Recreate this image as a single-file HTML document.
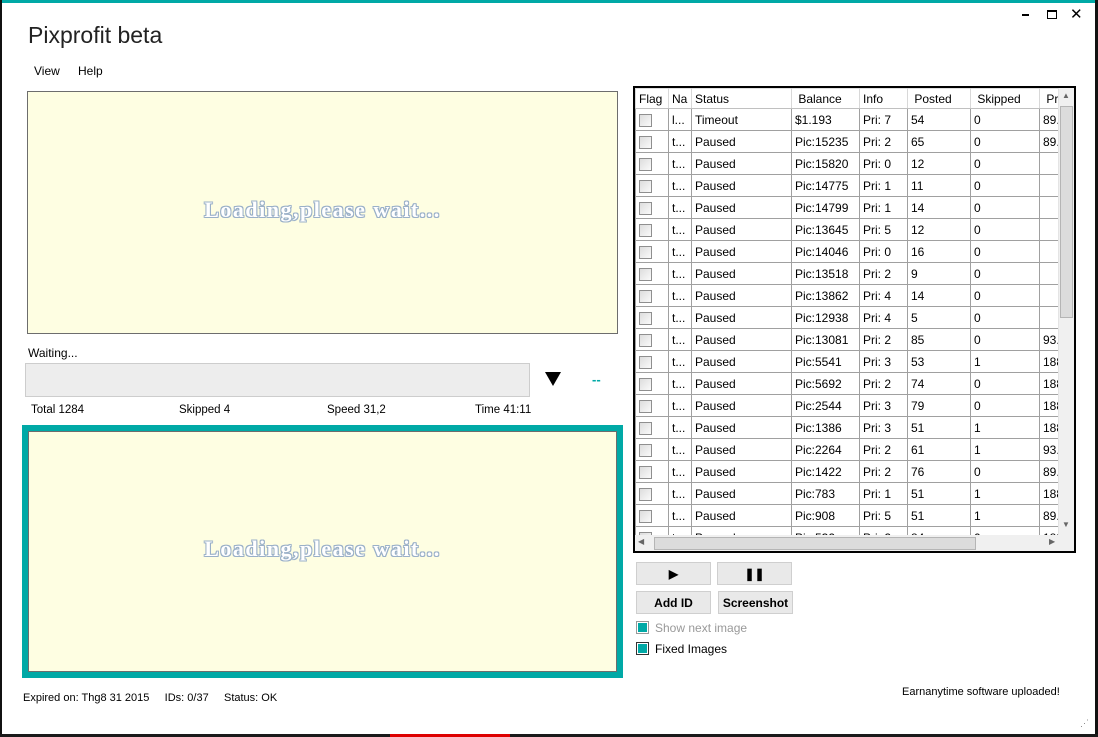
<!DOCTYPE html>
<html><head><meta charset="utf-8"><style>
*{margin:0;padding:0;box-sizing:border-box}
body{width:1098px;height:737px;background:#fff;position:relative;overflow:hidden;font-family:"Liberation Sans",sans-serif;font-size:12px;color:#000}
.a{position:absolute}
.load{background:#fefee2;border:1px solid #6d6d6d;display:flex;align-items:center;justify-content:center}
.lt{font-family:"Liberation Serif",serif;font-weight:bold;font-size:22px;color:#fff;letter-spacing:1.5px;text-shadow:1px 1px 0 #9ab0c8,-1px -1px 0 #9ab0c8,1px -1px 0 #9ab0c8,-1px 1px 0 #9ab0c8,0 1px 0 #9ab0c8,1px 0 0 #9ab0c8,0 -1px 0 #9ab0c8,-1px 0 0 #9ab0c8;margin-top:-6px}
table{border-collapse:collapse;font-size:12px;table-layout:fixed}
td,th{border:1px solid #a0a0a0;height:22px;padding:0 3px;white-space:nowrap;overflow:hidden;font-weight:normal;text-align:left}
th{height:20px;background:#fff;border-color:#e0e0e0 #d8d8d8 #c0c0c0}
.cb{display:inline-block;width:13px;height:13px;border:1px solid #8f8f8f;background:linear-gradient(135deg,#ddd,#fafafa);vertical-align:middle}
.btn{position:absolute;background:#e9e9e9;border:1px solid #cfcfcf;font-weight:bold;font-size:12px;display:flex;align-items:center;justify-content:center}
</style></head><body>
<div class="a" style="left:0;top:0;width:1098px;height:3px;background:#00a9a6"></div>
<div class="a" style="left:0;top:0;width:2px;height:737px;background:#111"></div>
<div class="a" style="left:1095px;top:0;width:3px;height:737px;background:#111"></div>
<div class="a" style="left:0;top:734px;width:1098px;height:3px;background:#1a1a1a"></div>
<div class="a" style="left:390px;top:734px;width:120px;height:3px;background:#d00"></div>
<div class="a" style="left:1022px;top:14px;width:7px;height:2px;background:#000"></div>
<div class="a" style="left:1047px;top:10px;width:10px;height:9px;border:1px solid #000;border-top-width:2px"></div>
<div class="a" style="left:1070px;top:5px;font-size:15px">✕</div>
<div class="a" style="left:28px;top:22px;font-size:23px;color:#222">Pixprofit beta</div>
<div class="a" style="left:34px;top:64px;font-size:12px">View</div>
<div class="a" style="left:78px;top:64px;font-size:12px">Help</div>
<div class="a load" style="left:27px;top:91px;width:591px;height:243px"><span class="lt">Loading,please wait...</span></div>
<div class="a" style="left:28px;top:346px">Waiting...</div>
<div class="a" style="left:25px;top:363px;width:505px;height:34px;background:#ededed;border:1px solid #cdcdcd"></div>
<div class="a" style="left:545px;top:372px;width:0;height:0;border-left:8px solid transparent;border-right:8px solid transparent;border-top:14px solid #000"></div>
<div class="a" style="left:592px;top:372px;color:#00a9a6;font-weight:bold;font-size:13px">--</div>
<div class="a" style="left:31px;top:404px;font-size:11.5px">Total 1284</div>
<div class="a" style="left:179px;top:404px;font-size:11.5px">Skipped 4</div>
<div class="a" style="left:327px;top:404px;font-size:11.5px">Speed 31,2</div>
<div class="a" style="left:475px;top:404px;font-size:11.5px">Time 41:11</div>
<div class="a" style="left:22px;top:425px;width:601px;height:253px;background:#00a9a6"></div>
<div class="a load" style="left:28px;top:431px;width:589px;height:241px"><span class="lt">Loading,please wait...</span></div>
<div class="a" style="left:23px;top:692px;font-size:11px">Expired on: Thg8 31 2015 &nbsp;&nbsp;&nbsp; IDs: 0/37 &nbsp;&nbsp;&nbsp; Status: OK</div>
<div class="a" style="left:902px;top:686px;font-size:11px">Earnanytime software uploaded!</div>
<div class="a" style="left:1080px;top:718px;color:#888;font-size:9px">⋰</div>

<div class="a" style="left:633px;top:86px;width:443px;height:467px;border:2px solid #000;overflow:hidden;background:#fff">
<table style="width:460px;position:absolute;left:0;top:0">
<colgroup><col style="width:33px"><col style="width:23px"><col style="width:100px"><col style="width:68px"><col style="width:48px"><col style="width:63px"><col style="width:69px"><col style="width:56px"></colgroup>
<tr><th>Flag</th><th>Na</th><th>Status</th><th>&nbsp;Balance</th><th>Info</th><th>&nbsp;Posted</th><th>&nbsp;Skipped</th><th>&nbsp;Pri</th></tr>
<tr><td><span class="cb"></span></td><td>l...</td><td>Timeout</td><td>$1.193</td><td>Pri: 7</td><td>54</td><td>0</td><td>89.</td></tr>
<tr><td><span class="cb"></span></td><td>t...</td><td>Paused</td><td>Pic:15235</td><td>Pri: 2</td><td>65</td><td>0</td><td>89.</td></tr>
<tr><td><span class="cb"></span></td><td>t...</td><td>Paused</td><td>Pic:15820</td><td>Pri: 0</td><td>12</td><td>0</td><td></td></tr>
<tr><td><span class="cb"></span></td><td>t...</td><td>Paused</td><td>Pic:14775</td><td>Pri: 1</td><td>11</td><td>0</td><td></td></tr>
<tr><td><span class="cb"></span></td><td>t...</td><td>Paused</td><td>Pic:14799</td><td>Pri: 1</td><td>14</td><td>0</td><td></td></tr>
<tr><td><span class="cb"></span></td><td>t...</td><td>Paused</td><td>Pic:13645</td><td>Pri: 5</td><td>12</td><td>0</td><td></td></tr>
<tr><td><span class="cb"></span></td><td>t...</td><td>Paused</td><td>Pic:14046</td><td>Pri: 0</td><td>16</td><td>0</td><td></td></tr>
<tr><td><span class="cb"></span></td><td>t...</td><td>Paused</td><td>Pic:13518</td><td>Pri: 2</td><td>9</td><td>0</td><td></td></tr>
<tr><td><span class="cb"></span></td><td>t...</td><td>Paused</td><td>Pic:13862</td><td>Pri: 4</td><td>14</td><td>0</td><td></td></tr>
<tr><td><span class="cb"></span></td><td>t...</td><td>Paused</td><td>Pic:12938</td><td>Pri: 4</td><td>5</td><td>0</td><td></td></tr>
<tr><td><span class="cb"></span></td><td>t...</td><td>Paused</td><td>Pic:13081</td><td>Pri: 2</td><td>85</td><td>0</td><td>93.</td></tr>
<tr><td><span class="cb"></span></td><td>t...</td><td>Paused</td><td>Pic:5541</td><td>Pri: 3</td><td>53</td><td>1</td><td>188</td></tr>
<tr><td><span class="cb"></span></td><td>t...</td><td>Paused</td><td>Pic:5692</td><td>Pri: 2</td><td>74</td><td>0</td><td>188</td></tr>
<tr><td><span class="cb"></span></td><td>t...</td><td>Paused</td><td>Pic:2544</td><td>Pri: 3</td><td>79</td><td>0</td><td>188</td></tr>
<tr><td><span class="cb"></span></td><td>t...</td><td>Paused</td><td>Pic:1386</td><td>Pri: 3</td><td>51</td><td>1</td><td>188</td></tr>
<tr><td><span class="cb"></span></td><td>t...</td><td>Paused</td><td>Pic:2264</td><td>Pri: 2</td><td>61</td><td>1</td><td>93.</td></tr>
<tr><td><span class="cb"></span></td><td>t...</td><td>Paused</td><td>Pic:1422</td><td>Pri: 2</td><td>76</td><td>0</td><td>89.</td></tr>
<tr><td><span class="cb"></span></td><td>t...</td><td>Paused</td><td>Pic:783</td><td>Pri: 1</td><td>51</td><td>1</td><td>188</td></tr>
<tr><td><span class="cb"></span></td><td>t...</td><td>Paused</td><td>Pic:908</td><td>Pri: 5</td><td>51</td><td>1</td><td>89.</td></tr>
<tr><td><span class="cb"></span></td><td>t...</td><td>Paused</td><td>Pic:532</td><td>Pri: 2</td><td>84</td><td>0</td><td>188</td></tr>
</table>
<div class="a" style="left:423px;top:0;width:17px;height:447px;background:#f0f0f0;border-left:1px solid #e4e4e4"></div>
<div class="a" style="left:427px;top:3px;font-size:8px;color:#666">▲</div>
<div class="a" style="left:425px;top:18px;width:13px;height:212px;background:#dcdcdc;border:1px solid #b5b5b5"></div>
<div class="a" style="left:427px;top:432px;font-size:8px;color:#666">▼</div>
<div class="a" style="left:0;top:447px;width:440px;height:17px;background:#f0f0f0"></div>
<div class="a" style="left:3px;top:449px;font-size:8px;color:#666">◀</div>
<div class="a" style="left:19px;top:449px;width:322px;height:13px;background:#dcdcdc;border:1px solid #b5b5b5"></div>
<div class="a" style="left:414px;top:449px;font-size:8px;color:#666">▶</div>
</div>

<div class="btn" style="left:636px;top:562px;width:75px;height:23px">▶</div>
<div class="btn" style="left:717px;top:562px;width:75px;height:23px">❚❚</div>
<div class="btn" style="left:636px;top:591px;width:75px;height:23px">Add ID</div>
<div class="btn" style="left:718px;top:591px;width:75px;height:23px">Screenshot</div>
<div class="a" style="left:636px;top:621px;width:13px;height:13px;border:1px solid #999;background:#00a9a6;box-shadow:inset 0 0 0 1px #fff"></div>
<div class="a" style="left:655px;top:621px;color:#999">Show next image</div>
<div class="a" style="left:636px;top:642px;width:13px;height:13px;border:1px solid #333;background:#00a9a6;box-shadow:inset 0 0 0 1px #fff"></div>
<div class="a" style="left:655px;top:642px">Fixed Images</div>
</body></html>
